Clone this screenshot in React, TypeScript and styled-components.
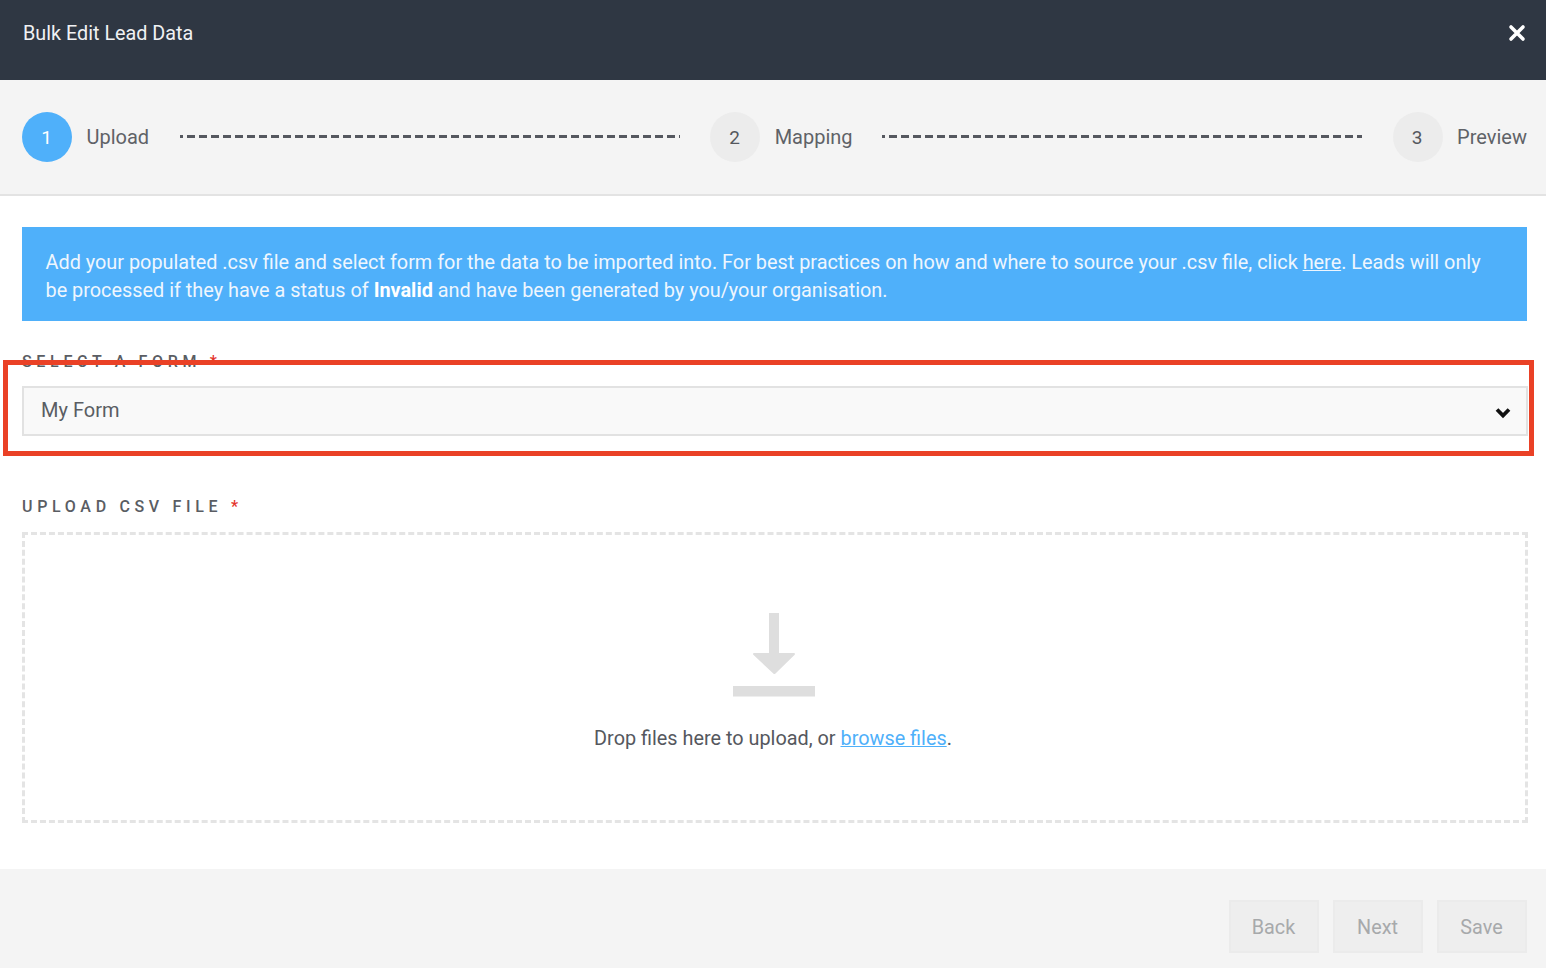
import React from "react";
import styled, { createGlobalStyle } from "styled-components";

const Global = createGlobalStyle`
  html, body { margin: 0; padding: 0; background: #fff; }
  body { font-family: Roboto, "Liberation Sans", sans-serif; overflow: hidden; }
  * { box-sizing: border-box; }
`;

const Modal = styled.div`
  position: relative;
  width: 1546px;
  height: 968px;
  display: flex;
  flex-direction: column;
  background: #fff;
`;

const Header = styled.header`
  height: 80px;
  flex: none;
  background: #2f3743;
  color: #fff;
  display: flex;
  align-items: center;
  justify-content: space-between;
  padding: 0 20px 0 23px;
`;

const Title = styled.h1`
  margin: 0 0 12px;
  font-size: 19.8px;
  font-weight: 400;
  line-height: 24px;
  color: #f0f1f3;
`;

const Close = styled.button`
  border: 0;
  padding: 0;
  background: none;
  width: 18px;
  height: 18px;
  display: flex;
  margin-bottom: 14px;
`;

const Stepper = styled.nav`
  height: 116px;
  flex: none;
  background: #f4f4f4;
  border-bottom: 2px solid #e3e3e3;
  display: flex;
  align-items: center;
  padding: 0 20px 0 22px;
`;

const Step = styled.div`
  display: flex;
  align-items: center;
  gap: 14.5px;
  flex: none;
`;

const Circle = styled.span<{ $active?: boolean }>`
  width: 50px;
  height: 50px;
  border-radius: 50%;
  display: flex;
  align-items: center;
  justify-content: center;
  padding-right: 1px;
  font-size: 19px;
  background: ${(p) => (p.$active ? "#4fb0fa" : "#ececec")};
  color: ${(p) => (p.$active ? "#fff" : "#55585e")};
`;

const StepLabel = styled.span`
  font-size: 20px;
  color: #5f6267;
`;

const Dash = styled.span<{ $w: number; $before: number; $after: number }>`
  flex: none;
  width: ${(p) => p.$w}px;
  margin: 0 ${(p) => p.$after}px 2px ${(p) => p.$before}px;
  height: 3px;
  background: linear-gradient(to right, #55585f 0 8px, transparent 8px 12px) -5px 0 / 12px 3px repeat-x;
`;

const Body = styled.main`
  flex: 1;
  padding: 31px 18px 0 22px;
  display: flex;
  flex-direction: column;
`;

const Info = styled.div`
  width: 1505px;
  height: 94px;
  background: #4fb0fa;
  color: #eef6fe;
  padding: 22px 24px 0 23.5px;
  font-size: 19.86px;
  line-height: 28px;
  a { color: inherit; text-decoration: underline; }
  b { font-weight: 700; color: #fff; }
`;

const FieldLabel = styled.label<{ $top: number }>`
  display: block;
  margin-top: ${(p) => p.$top}px;
  height: 22px;
  font-size: 16px;
  font-weight: 500;
  line-height: 22px;
  letter-spacing: 4.67px;
  color: #5a5d63;
  white-space: pre;
  em { font-style: normal; color: #e4342c; }
`;

const Select = styled.div`
  margin-top: 13px;
  width: 1506px;
  height: 50px;
  background: #f9f9f9;
  border: 2px solid #e2e2e2;
  display: flex;
  align-items: center;
  justify-content: space-between;
  padding: 0 15px 2px 17px;
  font-size: 20px;
  color: #5a5d63;
`;

const Chevron = styled.svg`
  margin-top: 6px;
`;

const Drop = styled.div`
  margin-top: 14px;
  width: 1506px;
  height: 291px;
  border: 3px dashed #e4e4e4;
  display: flex;
  flex-direction: column;
  align-items: center;
  padding-top: 78px;
`;

const DropText = styled.p`
  margin: 29px 4px 0 0;
  font-size: 19.85px;
  line-height: 26px;
  color: #55585e;
  a { color: #4fb0fa; text-decoration: underline; }
`;

const Footer = styled.footer`
  height: 99px;
  flex: none;
  background: #f4f4f4;
  display: flex;
  justify-content: flex-end;
  align-items: flex-start;
  gap: 14px;
  padding: 31px 19px 0 0;
`;

const Btn = styled.button`
  width: 90px;
  height: 53px;
  padding: 2px 1px 0 0;
  background: #eeeeee;
  border: 2px solid #ebebeb;
  color: #a7a9ab;
  font-family: inherit;
  font-size: 19.8px;
`;

const Highlight = styled.div`
  position: absolute;
  left: 3px;
  top: 360px;
  width: 1531px;
  height: 96px;
  border: 5px solid #ea4126;
  pointer-events: none;
`;

export default function App() {
  return (
    <Modal>
      <Global />
      <Header>
        <Title>Bulk Edit Lead Data</Title>
        <Close aria-label="Close">
          <svg width="18" height="18" viewBox="0 0 18 18">
            <path d="M3 3l12 12M15 3L3 15" stroke="#fff" strokeWidth="3.6" strokeLinecap="round" />
          </svg>
        </Close>
      </Header>
      <Stepper>
        <Step>
          <Circle $active>1</Circle>
          <StepLabel>Upload</StepLabel>
        </Step>
        <Dash $w={500} $before={31} $after={30} />
        <Step>
          <Circle>2</Circle>
          <StepLabel>Mapping</StepLabel>
        </Step>
        <Dash $w={480} $before={29} $after={31} />
        <Step>
          <Circle>3</Circle>
          <StepLabel>Preview</StepLabel>
        </Step>
      </Stepper>
      <Body>
        <Info>
          Add your populated .csv file and select form for the data to be imported into. For best practices on how and where to source your .csv file, click <a href="#here">here</a>. Leads will only be processed if they have a status of <b>Invalid</b> and have been generated by you/your organisation.
        </Info>
        <FieldLabel $top={30}>SELECT A FORM <em>*</em></FieldLabel>
        <Select>
          My Form
          <Chevron width="16" height="12" viewBox="0 0 16 12">
            <path d="M2 2.500l6 6 6-6" fill="none" stroke="#111" strokeWidth="3.8" />
          </Chevron>
        </Select>
        <FieldLabel $top={60}>UPLOAD CSV FILE <em>*</em></FieldLabel>
        <Drop>
          <svg width="84" height="84" viewBox="0 0 84 84">
            <path d="M36 0h10v40h15a1 1 0 0 1 .7 1.700L42.500 60.500a1.500 1.500 0 0 1-2.200 0L20.300 41.700A1 1 0 0 1 21 40h15z" fill="#dedede" />
            <rect x="0" y="73" width="82" height="10.500" fill="#dedede" />
          </svg>
          <DropText>
            Drop files here to upload, or <a href="#browse">browse files</a>.
          </DropText>
        </Drop>
      </Body>
      <Footer>
        <Btn>Back</Btn>
        <Btn>Next</Btn>
        <Btn>Save</Btn>
      </Footer>
      <Highlight />
    </Modal>
  );
}
